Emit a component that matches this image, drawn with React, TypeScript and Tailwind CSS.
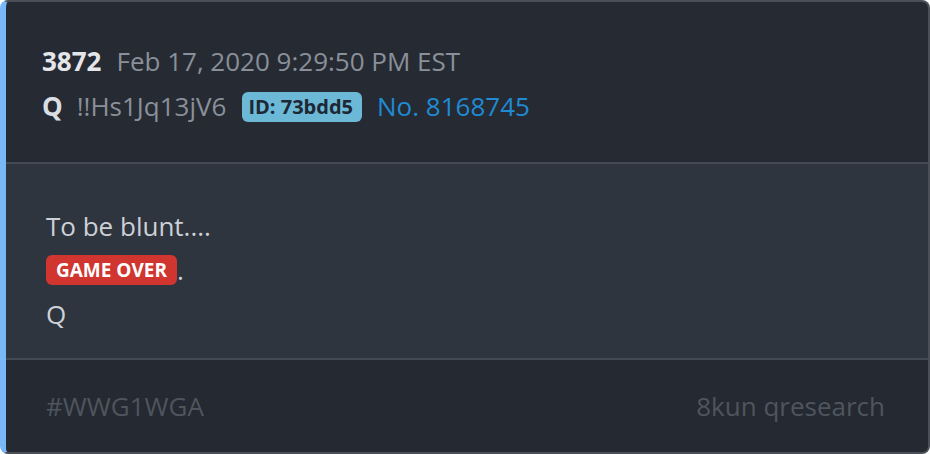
export default function App() {
  return (
    <main className="h-[454px] w-[930px] bg-white" style={{ fontFamily: '"Open Sans", "Noto Sans", sans-serif' }}>
      <div className="flex h-full flex-col overflow-hidden rounded-lg border-2 border-l-[6px] border-[#4a4f58] border-l-[#78b8f7] bg-[#262a33]">
        <header className="flex h-[160px] flex-col px-9 pt-[37px]">
          <div className="flex h-[45px] items-center text-[26px]">
            <span className="font-bold text-[#e4e6ea]">3872</span>
            <span className="ml-[15px] font-[370] text-[#8a9099]">Feb 17, 2020 9:29:50 PM EST</span>
          </div>
          <div className="flex h-[45px] items-center text-[26px]">
            <span className="font-bold text-[#dadde2]">Q</span>
            <span className="ml-[14px] font-[370] text-[#8a9099]">!!Hs1Jq13jV6</span>
            <span className="ml-4 flex h-[30px] items-center rounded-md bg-[#6cb9d7] pl-[6px] pr-[9px] text-[20px] font-bold text-[#1d2834]">
              ID: 73bdd5
            </span>
            <span className="ml-[15px] font-[370] text-[#1f8bd2]">No. 8168745</span>
          </div>
        </header>
        <div className="h-[2px] bg-[#444a53]" />
        <section className="flex h-[194px] flex-col bg-[#2f353e] px-10 pt-10 text-[26px] font-[370] text-[#cdd1d7]">
          <p className="flex h-[44px] items-center">To be blunt....</p>
          <p className="flex h-[44px] items-center">
            <span className="flex h-[30px] items-center rounded-md bg-[#d0352f] px-[10px] text-[19px] font-bold text-white">
              GAME OVER
            </span>
            <span>.</span>
          </p>
          <p className="flex h-[44px] items-center">Q</p>
        </section>
        <div className="h-[2px] bg-[#444a53]" />
        <footer className="flex flex-1 items-center justify-between bg-[#252931] pl-10 pr-[43px] text-[26px] font-[370] text-[#4f555e]">
          <span>#WWG1WGA</span>
          <span>8kun qresearch</span>
        </footer>
      </div>
    </main>
  );
}
